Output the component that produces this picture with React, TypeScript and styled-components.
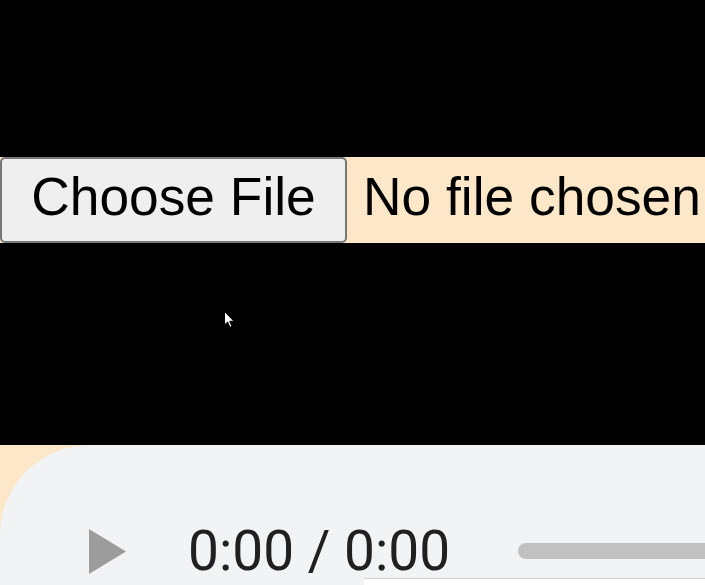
import styled, { createGlobalStyle } from 'styled-components';

const GlobalStyle = createGlobalStyle`
  html, body {
    margin: 0;
    padding: 0;
    background: #000;
    overflow: hidden;
  }
  body {
    font-family: 'Liberation Sans', Arial, sans-serif;
  }
`;

const Page = styled.div`
  width: 705px;
  height: 585px;
  padding-top: 157px;
  box-sizing: border-box;
  display: flex;
  flex-direction: column;
  overflow: hidden;
`;

const FileRow = styled.div`
  flex: none;
  height: 86px;
  display: flex;
  align-items: stretch;
  background: #fce8c8;
  font-size: 53.33px;
  color: #000;
`;

const ChooseButton = styled.button`
  width: 347px;
  box-sizing: border-box;
  margin: 0 16px 0 0;
  padding: 0 0 7px;
  border: 2px solid #767676;
  border-radius: 5px;
  background: #efeff0;
  font-family: 'Liberation Sans', Arial, sans-serif;
  font-size: 53.33px;
  color: #000;
  display: flex;
  align-items: center;
  justify-content: center;
`;

const FileLabel = styled.span`
  display: flex;
  align-items: center;
  padding-bottom: 7px;
  white-space: nowrap;
`;

const Gap = styled.div`
  flex: none;
  height: 202px;
  position: relative;
`;

const Cursor = styled.svg`
  position: absolute;
  left: 224px;
  top: 68px;
`;

const AudioWrap = styled.div`
  flex: 1;
  min-height: 0;
  background: #fce8c8;
`;

const AudioPanel = styled.div`
  height: 100%;
  background: #f1f3f4;
  border-top-left-radius: 90px;
  overflow: hidden;
  padding-top: 82px;
  box-sizing: border-box;
`;

const Controls = styled.div`
  height: 48px;
  display: flex;
  align-items: center;
  padding-left: 89px;
`;

const PlayIcon = styled.svg`
  flex: none;
  margin-right: 62px;
`;

const Time = styled.span`
  width: 330px;
  flex: none;
  font-family: Roboto, 'Noto Sans', sans-serif;
  font-size: 55px;
  line-height: 1;
  color: #202020;
  white-space: nowrap;
`;

const Timeline = styled.div`
  flex: 1;
  height: 16px;
  margin-right: -40px;
  border-radius: 8px;
  background: #c1c1c1;
`;

const Strip = styled.div`
  margin: 3px 0 0 364px;
  height: 10px;
  border-top: 1px solid #cfcfcf;
  background: #fff;
`;

export default function App() {
  return (
    <>
      <GlobalStyle />
      <Page>
        <FileRow>
          <ChooseButton type='button'>Choose File</ChooseButton>
          <FileLabel>No file chosen</FileLabel>
        </FileRow>
        <Gap>
          <Cursor width='11' height='17' viewBox='0 0 11 17'>
            <path d='M0.5 0.5 L0.5 14 L3.6 11 L6 16.3 L8 15.4 L5.7 10.3 L10 10.3 Z' fill='#fff' stroke='#000' strokeWidth='1' />
          </Cursor>
        </Gap>
        <AudioWrap>
          <AudioPanel>
            <Controls>
              <PlayIcon width='37' height='45' viewBox='0 0 37 45'>
                <path d='M0 0 L37 22.5 L0 45 Z' fill='#9c9c9c' />
              </PlayIcon>
              <Time>0:00 / 0:00</Time>
              <Timeline />
            </Controls>
            <Strip />
          </AudioPanel>
        </AudioWrap>
      </Page>
    </>
  );
}
